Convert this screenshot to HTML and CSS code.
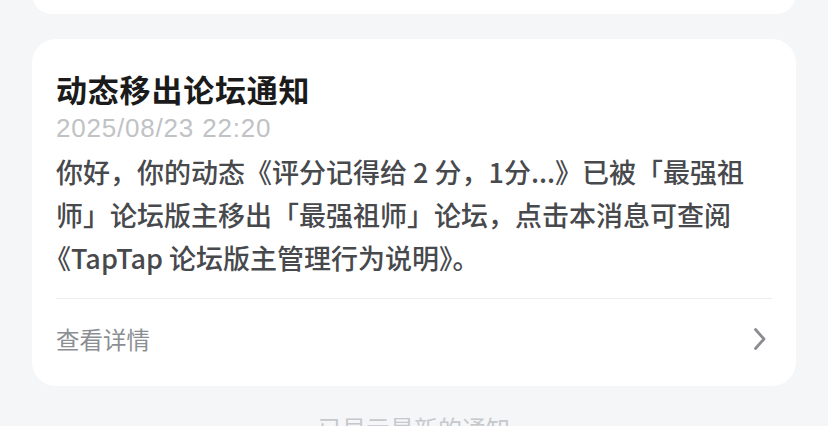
FILE: index.html
```html
<!DOCTYPE html>
<html lang="zh-CN">
<head>
<meta charset="utf-8">
<link rel="stylesheet" href="styles.css">
</head>
<body>
<div class="page">
  <div class="card card-prev"></div>
  <div class="card notice">
    <div class="title">动态移出论坛通知</div>
    <div class="date">2025/08/23 22:20</div>
    <div class="body">你好，你的动态《评分记得给 2 分，1分...》已被「最强祖<br>师」论坛版主移出「最强祖师」论坛，点击本消息可查阅<br><span class="open">《</span>TapTap 论坛版主管理行为说明》。</div>
    <div class="divider"></div>
    <div class="footer">
      <span class="more">查看详情</span>
      <svg class="chev" width="12" height="22" viewBox="0 0 12 22"><path d="M1.5 1.5 L10 11 L1.5 20.5" fill="none" stroke="#8a8c91" stroke-width="2.8" stroke-linecap="round" stroke-linejoin="round"/></svg>
    </div>
  </div>
  <div class="end">已显示最新的通知</div>
</div>
</body>
</html>
```
FILE: styles.css
```css
html, body {
  margin: 0;
  padding: 0;
  background: #f5f6f8;
  overflow: hidden;
}
body {
  font-family: "PingFang SC", "Noto Sans CJK SC", "Noto Sans", sans-serif;
}
.page {
  padding: 0 32px;
  display: flex;
  flex-direction: column;
}
.card {
  background: #ffffff;
  border-radius: 24px;
}
.card-prev {
  height: 40px;
  margin-top: -26px;
}
.notice {
  margin-top: 25px;
  padding: 30px 24px 0 24px;
}
.title {
  font-size: 31px;
  line-height: 40px;
  font-weight: 700;
  color: #1b1b1b;
  letter-spacing: 0.8px;
}
.date {
  margin-top: 2px;
  font-family: "Liberation Sans", "Noto Sans", sans-serif;
  font-size: 26px;
  line-height: 34px;
  color: #c0c2c6;
  letter-spacing: 0.8px;
}
.body {
  margin-top: 5px;
  font-size: 27px;
  line-height: 43px;
  font-weight: 500;
  color: #47494d;
  white-space: nowrap;
}
.open {
  margin-left: -12px;
}
.divider {
  margin-top: 19px;
  height: 1px;
  background: #ececee;
}
.footer {
  display: flex;
  align-items: center;
  justify-content: space-between;
  padding: 23px 0 30px 0;
}
.more {
  font-size: 23.5px;
  line-height: 34px;
  color: #8b8e93;
}
.chev {
  margin-right: 6px;
}
.end {
  margin-top: 25px;
  text-align: center;
  font-size: 24px;
  line-height: 34px;
  color: #c6c8cb;
}
```
